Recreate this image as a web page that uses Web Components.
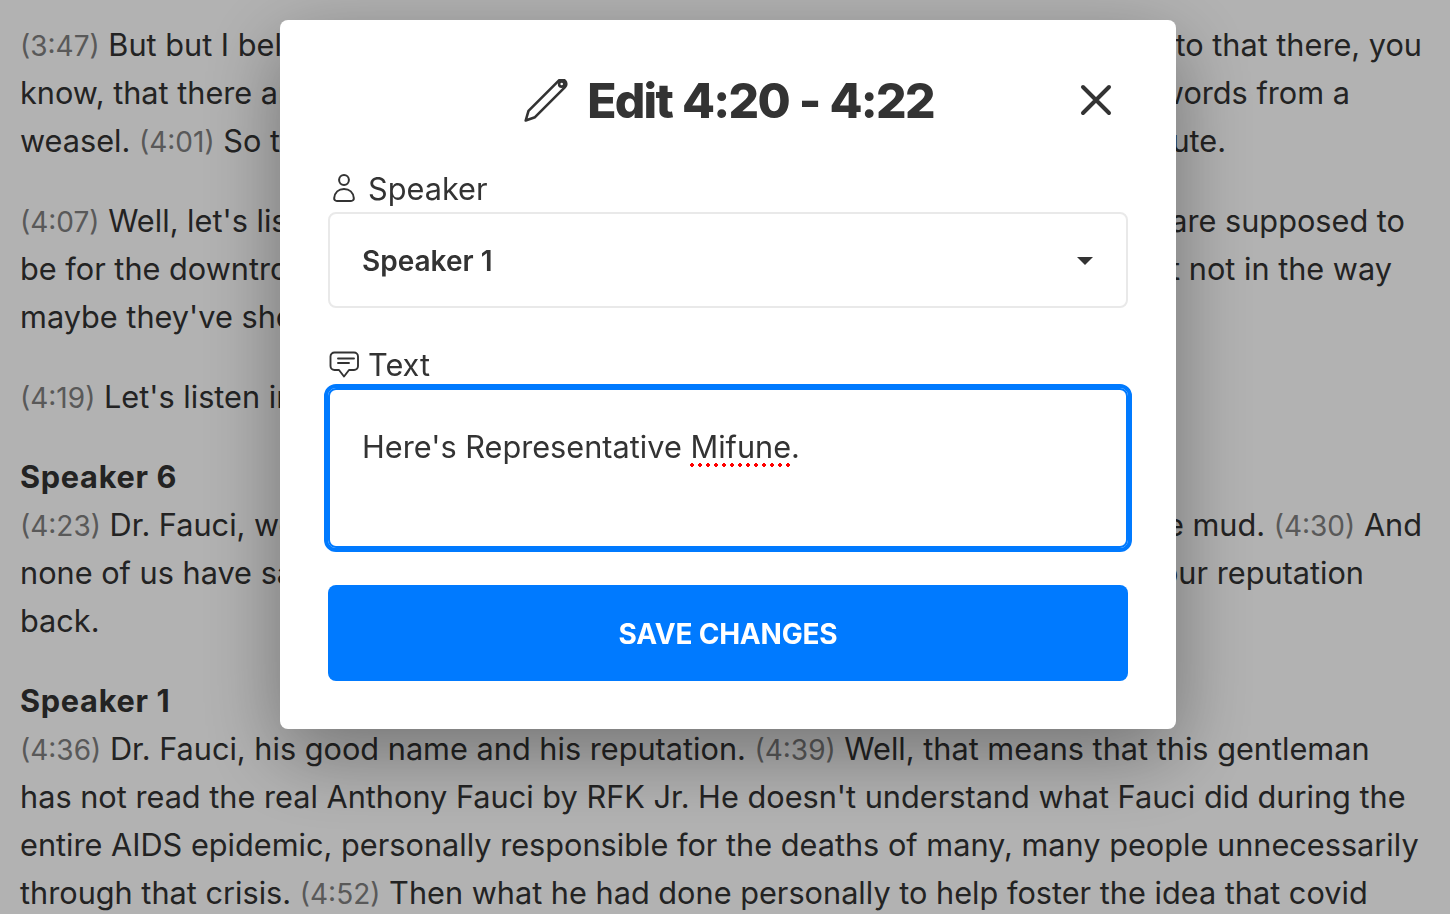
<!DOCTYPE html>
<html lang="en">
<head>
<meta charset="utf-8">
<title>Edit transcript</title>
<style>
  html, body { margin: 0; height: 100%; overflow: hidden; }
  body { font-family: Inter, "Liberation Sans", sans-serif; color: #333; background: #fff; }
</style>
</head>
<body>
<transcript-view>
  <transcript-para>
    <t-line><time-stamp>3:47</time-stamp> But but I believe<span slot="right">to that there, you</span></t-line>
    <t-line end="72">know, that there are<span slot="right">words from a</span></t-line>
    <t-line end="196">weasel. <time-stamp>4:01</time-stamp> So that<span slot="right">minute.</span></t-line>
  </transcript-para>
  <transcript-para>
    <t-line end="17"><time-stamp>4:07</time-stamp> Well, let's listen<span slot="right">are supposed to</span></t-line>
    <t-line end="30">be for the downtrodden<span slot="right">but not in the way</span></t-line>
    <t-line>maybe they've should</t-line>
  </transcript-para>
  <transcript-para>
    <t-line><time-stamp>4:19</time-stamp> Let's listen in</t-line>
  </transcript-para>
  <transcript-para>
    <t-line><speaker-name>Speaker 6</speaker-name></t-line>
    <t-line><time-stamp>4:23</time-stamp> Dr. Fauci, we<span slot="right">the mud. <time-stamp>4:30</time-stamp> And</span></t-line>
    <t-line end="58">none of us have said<span slot="right">our reputation</span></t-line>
    <t-line>back.</t-line>
  </transcript-para>
  <transcript-para>
    <t-line><speaker-name>Speaker 1</speaker-name></t-line>
    <t-line><time-stamp>4:36</time-stamp> Dr. Fauci, his good name and his reputation. <time-stamp>4:39</time-stamp> Well, that means that this gentleman</t-line>
    <t-line>has not read the real Anthony Fauci by RFK Jr. He doesn't understand what Fauci did during the</t-line>
    <t-line>entire AIDS epidemic, personally responsible for the deaths of many, many people unnecessarily</t-line>
    <t-line>through that crisis. <time-stamp>4:52</time-stamp> Then what he had done personally to help foster the idea that covid</t-line>
  </transcript-para>
</transcript-view>

<modal-overlay>
  <edit-dialog heading="Edit 4:20 - 4:22">
    <field-group label="Speaker" icon="person">
      <select-box>Speaker 1</select-box>
    </field-group>
    <field-group label="Text" icon="chat" tight>
      <text-box>Here's Representative <spell-error>Mifune</spell-error>.</text-box>
    </field-group>
    <primary-button>SAVE CHANGES</primary-button>
  </edit-dialog>
</modal-overlay>

<script>
const ICONS = {
  person: `<svg width="26" height="28" viewBox="0 0 26 28" fill="none" stroke="#333" stroke-width="2"><circle cx="13" cy="6" r="4.900"/><path d="M6 27h14c1.800 0 3-1.200 2.800-3C22.200 18.500 18.500 15 13 15S3.800 18.500 3.200 24C3 25.800 4.200 27 6 27z"/></svg>`,
  chat: `<svg width="31" height="28" viewBox="0 0 31 28" fill="none" stroke="#333" stroke-width="1.900" stroke-linecap="round" stroke-linejoin="round"><path d="M6.500 2.500h19.500a4 4 0 0 1 4 4v9.500a4 4 0 0 1-4 4h-5L16 26.500 11 20H6.500a4 4 0 0 1-4-4V6.500a4 4 0 0 1 4-4z"/><path d="M10 8.500h16M10 13h11"/></svg>`,
  pencil: `<svg width="44" height="44" viewBox="0 0 44 44" fill="none" stroke="#333" stroke-width="2.600" stroke-linecap="round" stroke-linejoin="round"><path d="M1.700 41.500L4.500 31.800 34.500 1.800a4.500 4.500 0 0 1 6.500 6.400L11 38.200z"/><circle cx="37.700" cy="5" r="2.600"/></svg>`
};

class TranscriptView extends HTMLElement {
  constructor() {
    super();
    this.attachShadow({ mode: "open" });
    this.shadowRoot.innerHTML = `
      <style>
        :host { display: flex; flex-direction: column; gap: 32px; padding: 21px 0 0 20px; width: 1402px; font-size: 30.7px; line-height: 48px; color: #333; }
      </style>
      <slot></slot>`;
  }
}

class TranscriptPara extends HTMLElement {
  constructor() {
    super();
    this.attachShadow({ mode: "open" });
    this.shadowRoot.innerHTML = `
      <style>:host { display: block; }</style>
      <slot></slot>`;
  }
}

class TLine extends HTMLElement {
  constructor() {
    super();
    this.attachShadow({ mode: "open" });
    this.shadowRoot.innerHTML = `
      <style>
        :host { display: flex; justify-content: space-between; height: 48px; white-space: nowrap; }
        .right { flex: none; }
      </style>
      <span><slot></slot></span>
      <span class="right"><slot name="right"></slot></span>`;
  }
  connectedCallback() {
    if (this.hasAttribute("end")) this.style.paddingRight = this.getAttribute("end") + "px";
  }
}

class TimeStamp extends HTMLElement {
  constructor() {
    super();
    this.attachShadow({ mode: "open" });
    this.shadowRoot.innerHTML = `<style>:host { display: inline; font-size: 28px; color: #808080; }</style>(<slot></slot>)`;
  }
}

class SpeakerName extends HTMLElement {
  constructor() {
    super();
    this.attachShadow({ mode: "open" });
    this.shadowRoot.innerHTML = `<style>:host { display: inline; font-weight: 700; letter-spacing: .7px; }</style><slot></slot>`;
  }
}

class ModalOverlay extends HTMLElement {
  constructor() {
    super();
    this.attachShadow({ mode: "open" });
    this.shadowRoot.innerHTML = `
      <style>
        :host { position: fixed; inset: 0; display: block; background: rgba(0,0,0,.3); padding: 20px 0 0 280px; box-sizing: border-box; }
      </style>
      <slot></slot>`;
  }
}

class EditDialog extends HTMLElement {
  constructor() {
    super();
    this.attachShadow({ mode: "open" });
    this.shadowRoot.innerHTML = `
      <style>
        :host { display: block; position: relative; width: 896px; height: 709px; box-sizing: border-box; padding: 48px; background: #fff; border-radius: 8px; box-shadow: 0 24px 80px rgba(0,0,0,.36); }
        header { display: flex; align-items: center; justify-content: center; gap: 19px; height: 64px; margin-bottom: 32px; }
        h2 { margin: 2px 0 0; font-size: 48px; font-weight: 800; line-height: 64px; color: #333; letter-spacing: -1.7px; word-spacing: 1px; }
        .icon { display: flex; margin-left: 2px; margin-top: 1px; }
        button { position: absolute; top: 62px; right: 62px; width: 36px; height: 36px; padding: 0; border: 0; background: none; }
      </style>
      <header>
        <span class="icon">${ICONS.pencil}</span>
        <h2></h2>
      </header>
      <button aria-label="Close">
        <svg width="36" height="36" viewBox="0 0 36 36" fill="none" stroke="#333" stroke-width="4" stroke-linecap="round"><path d="M5 5l26 26M31 5L5 31"/></svg>
      </button>
      <slot></slot>`;
  }
  connectedCallback() {
    this.shadowRoot.querySelector("h2").textContent = this.getAttribute("heading");
  }
}

class FieldGroup extends HTMLElement {
  constructor() {
    super();
    this.attachShadow({ mode: "open" });
    this.shadowRoot.innerHTML = `
      <style>
        :host { display: block; margin-bottom: 32px; }
        :host([tight]) { margin-bottom: 37px; }
        label { display: flex; align-items: center; gap: 9px; height: 48px; font-size: 30.7px; color: #333; }
        .ico { display: flex; width: 31px; justify-content: center; }
      </style>
      <label><span class="ico"></span><span class="txt"></span></label>
      <slot></slot>`;
  }
  connectedCallback() {
    this.shadowRoot.querySelector(".ico").innerHTML = ICONS[this.getAttribute("icon")];
    this.shadowRoot.querySelector(".txt").textContent = this.getAttribute("label");
  }
}

class SelectBox extends HTMLElement {
  constructor() {
    super();
    this.attachShadow({ mode: "open" });
    this.shadowRoot.innerHTML = `
      <style>
        :host { display: flex; align-items: center; justify-content: space-between; box-sizing: border-box; height: 96px; padding: 2px 33px 0 32px; border: 2px solid #e9e9e9; border-radius: 8px; font-size: 28px; font-weight: 600; color: #333; background: #fff; }
        i { width: 0; height: 0; border-left: 8px solid transparent; border-right: 8px solid transparent; border-top: 8px solid #333; }
      </style>
      <span><slot></slot></span><i></i>`;
  }
}

class TextBox extends HTMLElement {
  constructor() {
    super();
    this.attachShadow({ mode: "open" });
    this.shadowRoot.innerHTML = `
      <style>
        :host { display: block; box-sizing: border-box; height: 160px; padding: 33px 33px 33px 32px; border: 2px solid #007aff; border-radius: 8px; outline: 4px solid #007aff; outline-offset: 0; background: #fff; font-size: 30.7px; line-height: 48px; color: #333; }
      </style>
      <slot></slot>`;
  }
}

class SpellError extends HTMLElement {
  constructor() {
    super();
    this.attachShadow({ mode: "open" });
    this.shadowRoot.innerHTML = `
      <style>
        :host { display: inline-block; position: relative; }
        :host::after { content: ""; position: absolute; left: 0; right: 0; bottom: 4px; height: 4px; background: radial-gradient(circle at 2px 2px, #f00 1.700px, transparent 2px) 0 0 / 8px 4px repeat-x; }
      </style>
      <slot></slot>`;
  }
}

class PrimaryButton extends HTMLElement {
  constructor() {
    super();
    this.attachShadow({ mode: "open" });
    this.shadowRoot.innerHTML = `
      <style>
        :host { display: flex; align-items: center; justify-content: center; box-sizing: border-box; height: 96px; padding-top: 2px; background: #007aff; border-radius: 8px; color: #fff; font-size: 28px; font-weight: 700; letter-spacing: -.2px; }
      </style>
      <slot></slot>`;
  }
}

customElements.define("transcript-view", TranscriptView);
customElements.define("transcript-para", TranscriptPara);
customElements.define("t-line", TLine);
customElements.define("time-stamp", TimeStamp);
customElements.define("speaker-name", SpeakerName);
customElements.define("modal-overlay", ModalOverlay);
customElements.define("edit-dialog", EditDialog);
customElements.define("field-group", FieldGroup);
customElements.define("select-box", SelectBox);
customElements.define("text-box", TextBox);
customElements.define("spell-error", SpellError);
customElements.define("primary-button", PrimaryButton);
</script>
</body>
</html>
